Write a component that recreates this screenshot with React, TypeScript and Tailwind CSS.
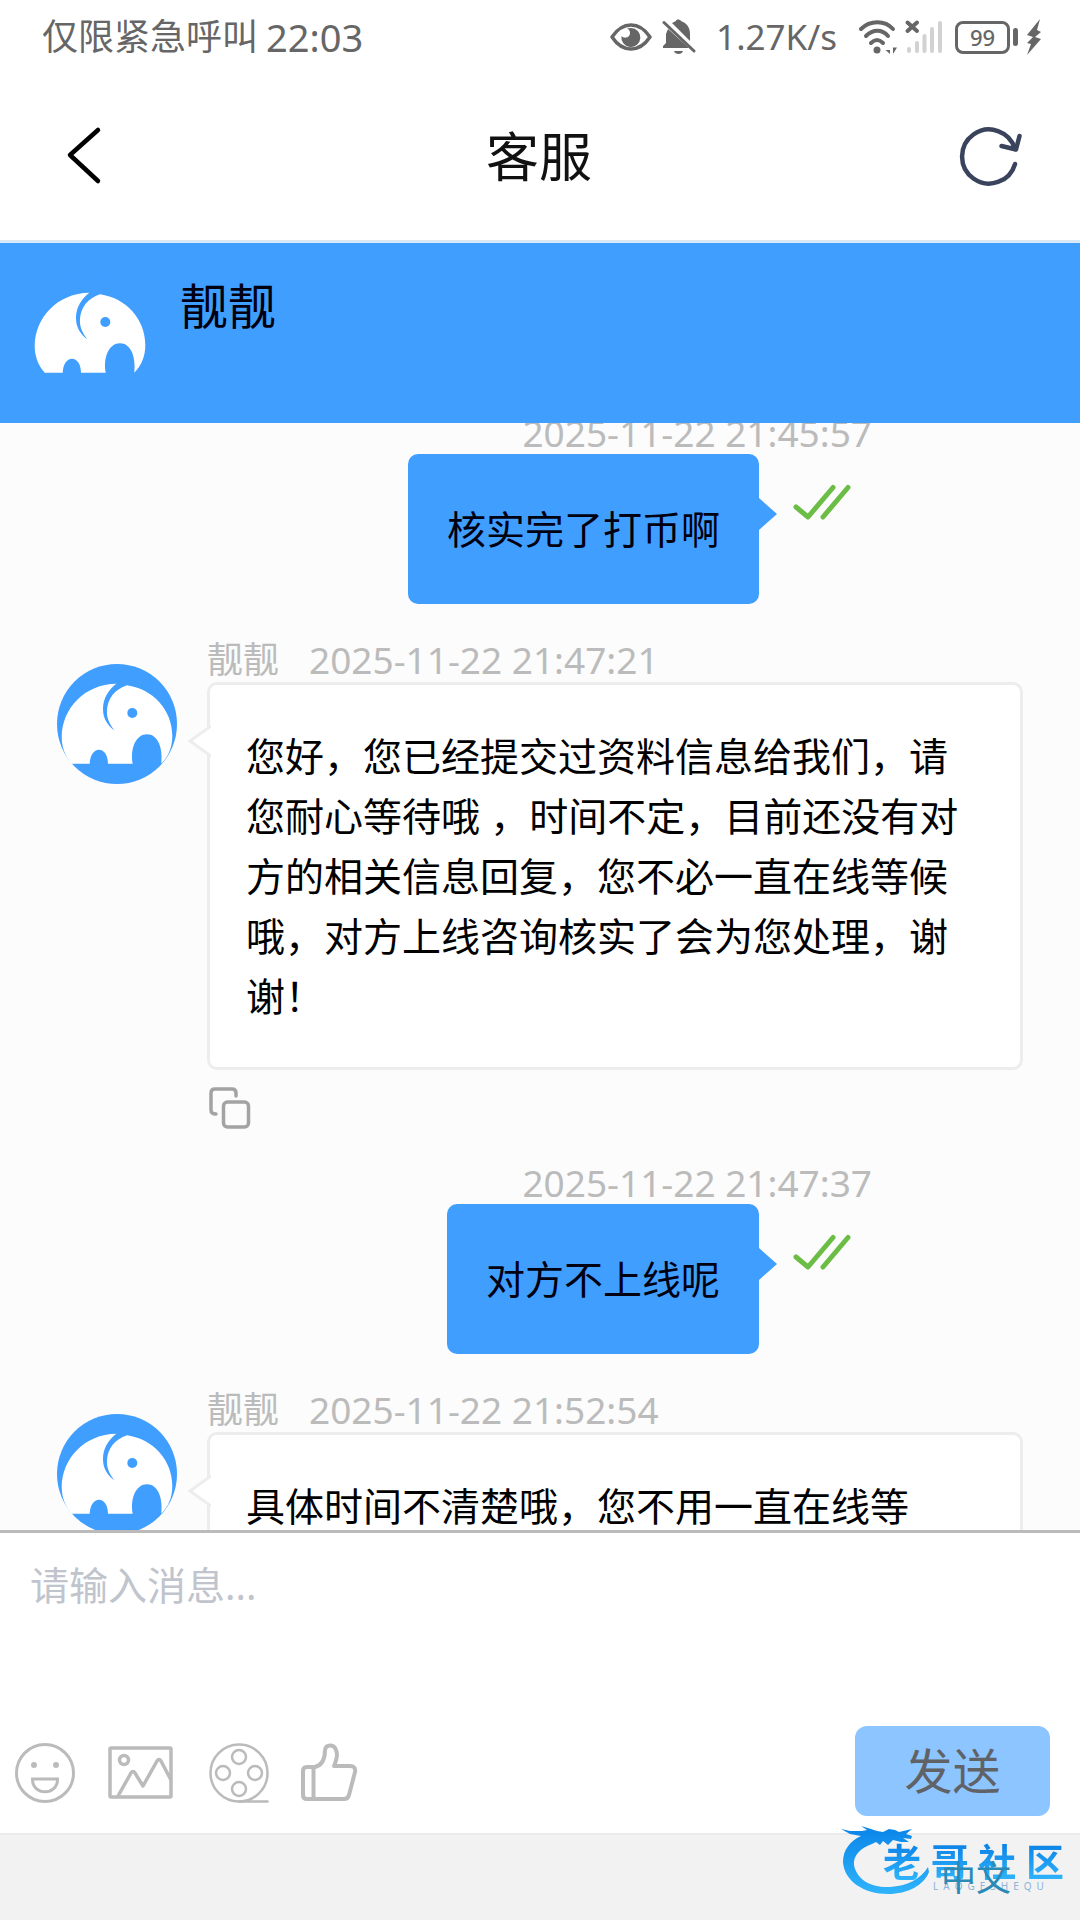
type Message = {
  id: number;
  mine: boolean;
  name?: string;
  time: string;
  text: string;
};

const messages: Message[] = [
  { id: 1, mine: true, time: "2025-11-22 21:45:57", text: "核实完了打币啊" },
  {
    id: 2,
    mine: false,
    name: "靓靓",
    time: "2025-11-22 21:47:21",
    text: "您好，您已经提交过资料信息给我们，请您耐心等待哦 ，时间不定，目前还没有对方的相关信息回复，您不必一直在线等候哦，对方上线咨询核实了会为您处理，谢谢！",
  },
  { id: 3, mine: true, time: "2025-11-22 21:47:37", text: "对方不上线呢" },
  {
    id: 4,
    mine: false,
    name: "靓靓",
    time: "2025-11-22 21:52:54",
    text: "具体时间不清楚哦，您不用一直在线等",
  },
];

function ElephantAvatar() {
  return (
    <svg viewBox="0 0 120 120" className="size-[120px] shrink-0" aria-hidden="true">
      <circle cx="60" cy="60" r="60" fill="#409eff" />
      <path
        fill="#fff"
        d="M14.7 99.7C8 92 4.7 83 4.7 73C5 44 28 20 59.3 19.7C51 26 46 35 46 45C46 54 50 61 57.3 66.3C51 58 49.5 52 50 46C50.5 35 58 25 70 21.3C96 25 115.3 46 115.3 72C115.3 84 111 93 104.3 99.7C106 84 101 70.3 90 70.3C79 70.3 73 84 75.7 99.7H51C51 91 47 85.7 42 85.7C37 85.7 33 91 32.7 99.7Z"
      />
      <circle cx="75.3" cy="49" r="5" fill="#409eff" />
    </svg>
  );
}

function StatusBar() {
  return (
    <div className="flex h-[74px] shrink-0 items-center justify-between pl-[42px] pr-[38px] text-[#666]">
      <div className="flex items-center gap-2 text-[36px] leading-[48px]">
        <span>仅限紧急呼叫</span>
        <span className="text-[38px]">22:03</span>
      </div>
      <div className="flex items-center">
        <svg viewBox="0 0 42 34" className="h-[34px] w-[42px]" aria-hidden="true">
          <path d="M2 17C8 8 14 5 21 5S34 8 40 17C34 26 28 29 21 29S8 26 2 17Z" fill="none" stroke="#666" strokeWidth="3.5" strokeLinejoin="round" />
          <path d="M21 8A9.5 9.5 0 1 1 11.5 16C14 19 20 18 20 13C20 11 19 9 17 8.5Z" fill="#666" />
        </svg>
        <svg viewBox="0 0 34 36" className="ml-2.5 h-[36px] w-[34px]" fill="#666" aria-hidden="true">
          <path d="M10 4L14 2C14 0 18 0 19 2C25 4 28 9 28 15V22Z" />
          <path d="M6 10L27 29H1V27L4 24V15Z" />
          <path d="M2 3.5L32 32" stroke="#666" strokeWidth="3" strokeLinecap="round" />
          <path d="M12 32H21C20 36 13 36 12 32Z" />
        </svg>
        <span className="ml-5 text-[35px] leading-[48px]">1.27K/s</span>
        <svg viewBox="0 0 86 36" className="ml-5 h-[36px] w-[86px]" fill="none" aria-hidden="true">
          <g stroke="#666" strokeWidth="4" strokeLinecap="round">
            <path d="M4 10C13 1 28 1 36 10" />
            <path d="M9 17C16 10 25 10 31 17" />
            <path d="M14 24C18 20 22 20 26 24" />
            <path d="M50.500 3.500L60 12M60 3.500L50.500 12" />
          </g>
          <circle cx="20" cy="31" r="3.5" fill="#666" />
          <path d="M33 27V35L28.500 31H33ZM36 27V35L40 28.500H36Z" fill="#666" />
          <g stroke="#d2d2d2" strokeWidth="4" strokeLinecap="round">
            <path d="M52 30V32M60 24V32M67.5 17V32M75 10V32M83 4V32" />
          </g>
        </svg>
        <div className="ml-3 flex h-[33px] w-[55px] items-center justify-center rounded-lg border-[3px] border-[#666] text-[22px] font-medium leading-none">
          99
        </div>
        <div className="ml-[3px] h-[18px] w-[5px] rounded-sm bg-[#666]" />
        <svg viewBox="0 0 16 36" className="ml-2 h-[36px] w-[16px]" aria-hidden="true">
          <path d="M14 0L1 16L7 18L1 24L5 25L1 36L15 20L9 18L15 13L11 11Z" fill="#666" />
        </svg>
      </div>
    </div>
  );
}

function NavBar() {
  return (
    <header className="flex h-[169px] shrink-0 items-center justify-between border-b-[3px] border-[#dbe8f5] pl-[54px] pr-[56px]">
      <button type="button" aria-label="返回" className="flex size-[66px] items-center">
        <svg viewBox="0 0 66 66" className="size-[66px]" fill="none" stroke="#000" strokeWidth="4.5" strokeLinecap="round" strokeLinejoin="round">
          <path d="M44 6L16 31L44 57" />
        </svg>
      </button>
      <h1 className="text-[53px] leading-[64px] text-[#111]">客服</h1>
      <button type="button" aria-label="刷新" className="flex size-[66px] items-center">
        <svg viewBox="0 0 66 66" className="size-[66px]" fill="none" stroke="#39435c" strokeWidth="4.5" strokeLinecap="round" strokeLinejoin="round">
          <path d="M57 40A27 27 0 1 1 57 25" />
          <path d="M43.500 22L58 25.500L61.500 12" />
        </svg>
      </button>
    </header>
  );
}

function SentMark() {
  return (
    <svg viewBox="0 0 58 36" className="h-[36px] w-[58px]" fill="none" stroke="#6cbd45" strokeWidth="5" strokeLinecap="round" strokeLinejoin="round" aria-label="已读">
      <path d="M3 23L15 33L40 3.5" />
      <path d="M30 33L55 3.5" />
    </svg>
  );
}

function OutgoingMessage({ message }: { message: Message }) {
  return (
    <li className="flex flex-col items-end">
      <time className="pr-[208px] text-[37px] leading-[42px] text-[#bbb]">{message.time}</time>
      <div className="flex items-start pr-[229px]">
        <p className="rounded-[10px] bg-[#409eff] px-[39px] py-[45px] text-[39px] leading-[60px] text-[#000010]">
          {message.text}
        </p>
        <svg viewBox="0 0 18 32" className="mt-[44px] h-[32px] w-[18px]" aria-hidden="true">
          <path d="M0 0L18 16L0 32Z" fill="#409eff" />
        </svg>
        <div className="ml-4 mt-[30px]">
          <SentMark />
        </div>
      </div>
    </li>
  );
}

function IncomingMessage({ message }: { message: Message }) {
  return (
    <li className="flex items-start pl-[57px] pr-[57px] pt-[33px]">
      <div className="pt-[27px]">
        <ElephantAvatar />
      </div>
      <div className="min-w-0 flex-1 pl-[30px]">
        <div className="flex items-center gap-[30px] text-[36px] leading-[45px] text-[#bbb]">
          <span>{message.name}</span>
          <time className="text-[37px]">{message.time}</time>
        </div>
        <div className="relative rounded-[10px] border-[3px] border-[#ededed] bg-white px-[36px] py-[41px]">
          {/* bubble tail sits over the left border */}
          <svg viewBox="0 0 24 32" className="absolute -left-[23px] top-[40px] h-[32px] w-[24px]" aria-hidden="true">
            <path d="M24 1L3 16L24 31" fill="#fff" stroke="#ededed" strokeWidth="3" />
          </svg>
          <p className="text-[39px] leading-[60px] text-black">{message.text}</p>
        </div>
        <button type="button" aria-label="复制" className="mb-[33px] mt-[17px] block h-[42px] w-[44px]">
          <svg viewBox="0 0 44 42" className="h-[42px] w-[44px]" fill="none" stroke="#a3a3a3" strokeWidth="3.500" strokeLinecap="round">
            <rect x="16.500" y="15" width="25" height="25" rx="4" />
            <path d="M29 9V6Q29 2 25 2H8Q4 2 4 6V23Q4 27 9 27" />
          </svg>
        </button>
      </div>
    </li>
  );
}

function Composer() {
  return (
    <form className="flex h-[303px] shrink-0 flex-col border-t-[3px] border-[#bbb] bg-white" onSubmit={(e) => e.preventDefault()}>
      <textarea
        aria-label="消息"
        placeholder="请输入消息..."
        className="block min-h-0 w-full flex-1 resize-none px-[30px] pt-[22px] text-[39px] leading-[60px] outline-none placeholder:text-[#c0c4cc]"
      />
      <div className="flex items-center justify-between pb-[17px] pl-[15px] pr-[30px]">
        <div className="flex items-center pt-1">
          <button type="button" aria-label="表情">
            <svg viewBox="0 0 60 60" className="size-[60px]" fill="none" stroke="#bbb" strokeWidth="3">
              <circle cx="30" cy="30" r="28.5" />
              <circle cx="19" cy="22" r="3" fill="#bbb" stroke="none" />
              <circle cx="41" cy="22" r="3" fill="#bbb" stroke="none" />
              <path d="M17.5 36H42.5C43 53 17 53 17.5 36Z" />
            </svg>
          </button>
          <button type="button" aria-label="图片" className="ml-8">
            <svg viewBox="0 0 66 60" className="h-[60px] w-[66px]" fill="none" stroke="#bbb" strokeWidth="3.5" strokeLinejoin="round">
              <rect x="3" y="5" width="61" height="49" rx="1" />
              <circle cx="17" cy="17" r="4.5" />
              <path d="M11 53L24 30Q26 27 28 30L36 43L50 18Q52 15 54 18L64 37" />
            </svg>
          </button>
          <button type="button" aria-label="视频" className="ml-9">
            <svg viewBox="0 0 60 60" className="size-[60px]" fill="none" stroke="#bbb" strokeWidth="2.5" strokeLinecap="round">
              <circle cx="30" cy="30" r="28.5" />
              <circle cx="30" cy="14" r="7" />
              <circle cx="14" cy="30" r="7" />
              <circle cx="46" cy="30" r="7" />
              <circle cx="30" cy="46" r="7" />
              <path d="M30 58.5H58.5" />
            </svg>
          </button>
          <button type="button" aria-label="点赞" className="ml-8">
            <svg viewBox="0 0 58 60" className="h-[60px] w-[58px]" fill="none" stroke="#bbb" strokeWidth="4" strokeLinejoin="round">
              <path d="M14 24H6Q2 24 2 28V52Q2 56 6 56H43Q47 56 48 52L54 29Q55 23 49 23H33C36 16 37 11 35 7C33 1 25 1 24 7C24 15 22 22 14 24Z" />
              <path d="M12.500 24V56" />
            </svg>
          </button>
        </div>
        <button type="submit" className="h-[90px] w-[195px] rounded-[12px] bg-[#8cc5ff] text-[48px] leading-[60px] text-[#606266]">
          发送
        </button>
      </div>
    </form>
  );
}

function Watermark() {
  return (
    <div className="pointer-events-none absolute -top-2.5 right-4 flex items-start" aria-hidden="true">
      <svg viewBox="0 0 92 72" className="h-[72px] w-[92px]">
        <defs>
          <linearGradient id="dragon" x1="0" y1="0" x2="0" y2="1">
            <stop offset="0" stopColor="#0a84e8" />
            <stop offset="1" stopColor="#2fb4fb" />
          </linearGradient>
        </defs>
        <path
          fill="url(#dragon)"
          d="M0 4L9 6L21 6L26 5L20 1L30 4L36 6L42 7L48 4L54 5L58 7L71 4L65 9L71 11L70 14L62 13L68 17L60 17L52 15L47 20L42 16L39 20L35 17L31 19C19 23 12 31 13 40C16 56 32 63 49 62C66 61 80 54 87 42L88 47C83 60 67 69 47 69C23 69 3 56 2 37C2 25 9 16 20 11L9 9Z"
        />
      </svg>
      <div className="-ml-[50px] w-[181px] pt-[17px]">
        <div className="flex justify-between bg-linear-to-b from-[#0a7fe6] to-[#2fb4fb] bg-clip-text text-[38px] font-bold leading-[38px] text-transparent">
          <span>老</span>
          <span>哥</span>
          <span>社</span>
          <span>区</span>
        </div>
        <div className="flex justify-between pl-[50px] pr-5 text-[10px] leading-3 text-[#8db4d8]">
          {"LAOGESHEQU".split("").map((letter, i) => (
            <span key={i}>{letter}</span>
          ))}
        </div>
      </div>
    </div>
  );
}

export default function App() {
  return (
    <div
      lang="zh-CN"
      className="flex h-screen flex-col overflow-hidden bg-white font-['Noto_Sans','Noto_Sans_CJK_SC',sans-serif]"
    >
      <StatusBar />
      <NavBar />
      <section className="flex h-[180px] shrink-0 items-start gap-[30px] bg-[#409eff] p-[30px]">
        <ElephantAvatar />
        <h2 className="text-[48px] leading-[66px] text-[#000010]">靓靓</h2>
      </section>
      <main className="min-h-0 flex-1 overflow-hidden bg-[#fcfcfc]">
        <ul className="-mt-[11px]">
          {messages.map((message) =>
            message.mine ? (
              <OutgoingMessage key={message.id} message={message} />
            ) : (
              <IncomingMessage key={message.id} message={message} />
            ),
          )}
        </ul>
      </main>
      <Composer />
      <footer className="relative flex h-[87px] shrink-0 items-center justify-end border-t-2 border-[#ebebeb] bg-[#f2f2f2] pr-[69px]">
        <Watermark />
        <a href="#language" className="relative text-[35px] leading-[42px] text-[#2b8ab5]">
          中文
        </a>
      </footer>
    </div>
  );
}
